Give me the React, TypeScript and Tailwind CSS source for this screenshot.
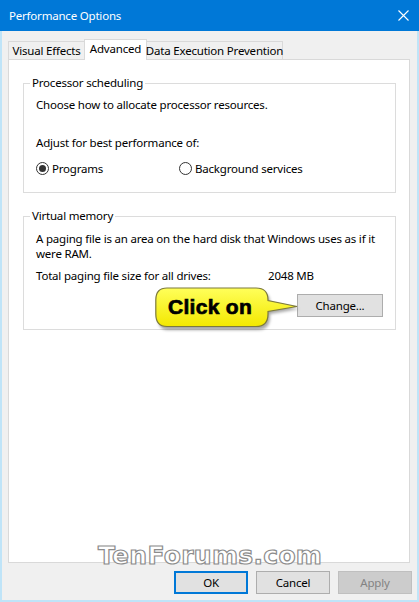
import React from "react";

function Radio({ checked }: { checked?: boolean }) {
  return (
    <span className="w-[13px] h-[13px] rounded-full border border-[#333333] bg-white flex items-center justify-center shrink-0">
      {checked && <span className="w-[7px] h-[7px] rounded-full bg-[#333333]" />}
    </span>
  );
}

function Callout() {
  return (
    <div className="absolute left-[155px] top-[287px] w-[150px] h-[48px]">
      <svg width="150" height="48" viewBox="0 0 150 48" className="absolute left-0 top-0">
        <defs>
          <linearGradient id="yg" x1="0" y1="0" x2="0" y2="1">
            <stop offset="0" stopColor="#ffff5a" />
            <stop offset="1" stopColor="#f3e800" />
          </linearGradient>
          <filter id="sh" x="-10%" y="-10%" width="130%" height="140%">
            <feGaussianBlur stdDeviation="1.6" />
          </filter>
        </defs>
        <path
          d="M13,4 H102 Q115,4 115,16 V16 L144,22 L115,27 V30 Q115,43 102,43 H13 Q3,43 3,30 V16 Q3,4 13,4 Z"
          fill="rgba(0,0,0,0.35)"
          filter="url(#sh)"
        />
        <path
          d="M12,1 H101 Q113,1 113,13 V13.5 L142,19.5 L113,24.5 V27 Q113,39.5 101,39.5 H12 Q0.8,39.5 0.8,27 V13 Q0.8,1 12,1 Z"
          fill="url(#yg)"
          stroke="#7d7a3c"
          strokeWidth="1.2"
        />
      </svg>
      <span className="absolute left-[13px] top-[8px] text-[21px] leading-[24px] font-black text-black font-['Liberation_Sans',Arial,sans-serif] tracking-[0.3px] [-webkit-text-stroke:0.7px_#000]">
        Click on
      </span>
    </div>
  );
}

export default function App() {
  return (
    <div className="relative w-[419px] h-[602px] flex flex-col overflow-hidden font-['Noto_Sans',sans-serif] text-[11.5px] tracking-[-0.2px] text-black">
      {/* Title bar */}
      <div className="h-[31px] bg-[#0078d7] flex items-center justify-between pl-[9px] pr-[10px] shrink-0">
        <span className="text-white leading-[16px]">Performance Options</span>
        <svg width="11" height="11" viewBox="0 0 11 11">
          <path d="M0.5 0.5 L10.5 10.5 M10.5 0.5 L0.5 10.5" stroke="#ffffff" strokeWidth="1.1" />
        </svg>
      </div>

      {/* Body */}
      <div className="flex-1 flex flex-col bg-[#f0f0f0] border-x-2 border-b-2 border-[#bfe4f8] min-h-0">
        {/* Tabs */}
        <div className="flex items-end h-[21px] mt-[8px] ml-[6px] relative z-10 whitespace-nowrap">
          <div className="h-[18px] mb-[1px] w-[77px] border border-b-0 border-[#d9d9d9] bg-[#f0f0f0] flex items-center justify-center leading-[16px]">
            Visual Effects
          </div>
          <div className="h-[21px] w-[63px] -ml-px border border-b-0 border-[#d9d9d9] bg-white flex items-start justify-center pt-[1px] leading-[16px]">
            Advanced
          </div>
          <div className="h-[18px] mb-[1px] w-[137px] -ml-px border border-b-0 border-[#d9d9d9] bg-[#f0f0f0] flex items-center justify-center leading-[16px]">
            Data Execution Prevention
          </div>
        </div>

        {/* Panel */}
        <div className="flex-1 -mt-px ml-[6px] mr-[7px] bg-white border border-[#d9d9d9] pt-[15px] pl-[14px] pr-[13px] flex flex-col">
          <fieldset className="min-w-0 border border-[#dcdcdc] px-[12px] pt-[6px] pb-[16px] leading-[15px]">
            <legend className="ml-[-6px] px-[2px] leading-[16px]">Processor scheduling</legend>
            <div>Choose how to allocate processor resources.</div>
            <div className="mt-[23px]">Adjust for best performance of:</div>
            <div className="mt-[11px] flex items-center">
              <div className="w-[143px] flex items-center gap-[3px]">
                <Radio checked />
                <span>Programs</span>
              </div>
              <div className="flex items-center gap-[3px]">
                <Radio />
                <span>Background services</span>
              </div>
            </div>
          </fieldset>

          <fieldset className="min-w-0 mt-[15px] border border-[#dcdcdc] px-[12px] pt-[7px] pb-[12px] leading-[15px]">
            <legend className="ml-[-6px] px-[2px] leading-[16px]">Virtual memory</legend>
            <div className="whitespace-nowrap">A paging file is an area on the hard disk that Windows uses as if it</div>
            <div className="whitespace-nowrap">were RAM.</div>
            <div className="mt-[7px] flex">
              <span className="w-[232px]">Total paging file size for all drives:</span>
              <span>2048 MB</span>
            </div>
            <div className="mt-[11px] flex justify-end">
              <button className="w-[86px] h-[23px] bg-[#e1e1e1] border border-[#adadad] leading-[15px] text-black">
                Change...
              </button>
            </div>
          </fieldset>
        </div>

        {/* Buttons */}
        <div className="flex justify-end gap-[8px] mt-[8px] mb-[6px] pr-[5px] h-[23px] shrink-0">
          <button className="w-[74px] h-[23px] bg-[#e1e1e1] border-2 border-[#0078d7] text-black leading-[15px]">OK</button>
          <button className="w-[74px] h-[23px] bg-[#e1e1e1] border border-[#adadad] text-black leading-[15px]">Cancel</button>
          <button className="w-[74px] h-[23px] bg-[#cccccc] border border-[#bfbfbf] text-[#838383] leading-[15px]">Apply</button>
        </div>
      </div>

      <Callout />

      {/* Watermark */}
      <div className="absolute left-[98px] top-[542px] text-[25px] leading-[28px] font-bold text-white font-['DejaVu_Sans',sans-serif] [-webkit-text-stroke:1.2px_#8c8c8c] tracking-[0.3px]">
        TenForums.com
      </div>
    </div>
  );
}
